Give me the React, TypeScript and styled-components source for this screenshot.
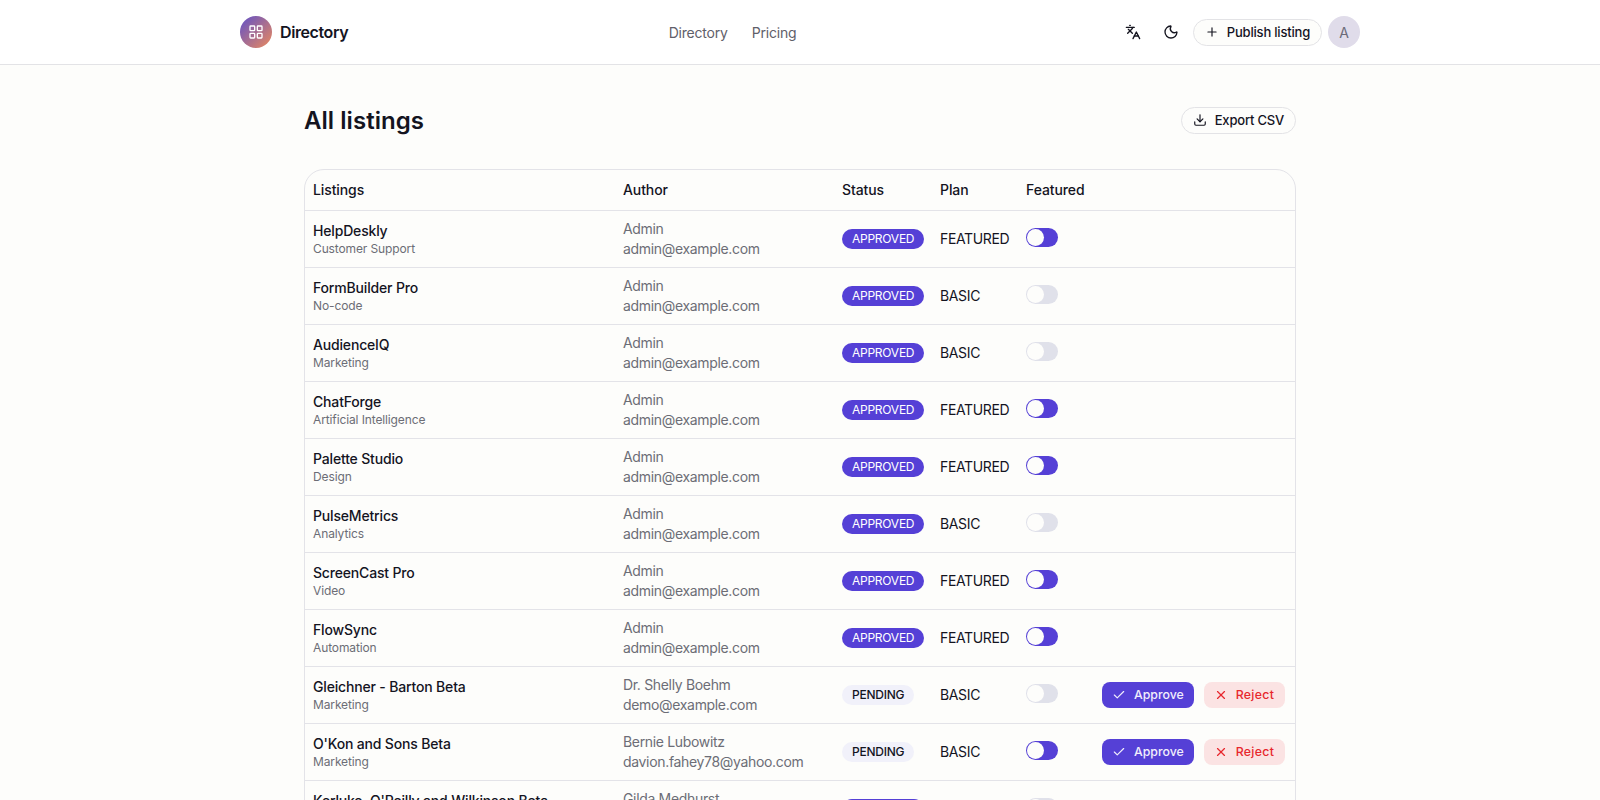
import { Check, Download, LayoutGrid, Languages, Moon, Plus, X } from 'lucide-react';
import styled, { createGlobalStyle } from 'styled-components';

const GlobalStyle = createGlobalStyle`
  html, body {
    margin: 0;
    height: 100%;
    overflow: hidden;
  }
  body {
    background: #fdfdfb;
    color: #14141f;
    font-family: Inter, "Liberation Sans", sans-serif;
  }
  * {
    box-sizing: border-box;
  }
`;

const Header = styled.header`
  height: 65px;
  background: #fff;
  border-bottom: 1px solid #e3e3e6;
  display: flex;
  justify-content: center;
`;

const HeaderInner = styled.div`
  width: 1120px;
  display: flex;
  justify-content: space-between;
  align-items: center;
`;

const Brand = styled.div`
  display: flex;
  align-items: center;
  gap: 8px;
  font-size: 16px;
  font-weight: 600;
  letter-spacing: -0.4px;
`;

const LogoMark = styled.div`
  width: 32px;
  height: 32px;
  border-radius: 50%;
  background: linear-gradient(135deg, #5f50c9, #ec8a5c);
  color: #fff;
  display: flex;
  align-items: center;
  justify-content: center;
`;

const Nav = styled.nav`
  display: flex;
  gap: 24px;
  font-size: 14px;
  letter-spacing: -0.2px;
  color: #5f6069;
`;

const HeaderActions = styled.div`
  display: flex;
  align-items: center;
  gap: 6px;
`;

const IconButton = styled.button`
  width: 32px;
  height: 32px;
  padding: 0;
  border: 0;
  background: none;
  color: #14141f;
  display: flex;
  align-items: center;
  justify-content: center;
`;

const OutlineButton = styled.button`
  height: 27px;
  padding: 0 11px;
  border: 1px solid #e3e3e6;
  border-radius: 14px;
  background: #fdfdfb;
  color: #14141f;
  font: 500 13px Inter, "Liberation Sans", sans-serif;
  letter-spacing: -0.2px;
  display: flex;
  align-items: center;
  gap: 8px;
`;

const Avatar = styled.div`
  width: 32px;
  height: 32px;
  border-radius: 50%;
  background: #e0dcea;
  color: #6b6b78;
  font-size: 14px;
  display: flex;
  align-items: center;
  justify-content: center;
`;

const Main = styled.main`
  width: 992px;
  margin: 0 auto;
  padding-top: 41px;
`;

const TitleRow = styled.div`
  display: flex;
  align-items: center;
  justify-content: space-between;
  height: 28px;
  margin-bottom: 35px;
`;

const Title = styled.h1`
  margin: 0;
  font-size: 24px;
  font-weight: 600;
  letter-spacing: 0.05px;
`;

const TableFrame = styled.div`
  border: 1px solid #e3e3e8;
  border-radius: 20px;
  overflow: hidden;
`;

const Table = styled.table`
  width: 100%;
  table-layout: fixed;
  border-collapse: collapse;
  font-size: 14px;
`;

const HeadCell = styled.th<{ $width?: number }>`
  ${(p) => (p.$width ? `width: ${p.$width}px;` : '')}
  height: 40px;
  padding: 0 8px;
  text-align: left;
  font-size: 14px;
  font-weight: 500;
  letter-spacing: -0.1px;
  border-bottom: 1px solid #e3e3e8;
`;

const Row = styled.tr`
  height: 57px;
  border-bottom: 1px solid #e3e3e8;
`;

const Cell = styled.td`
  padding: 0 8px;
  vertical-align: middle;
  white-space: nowrap;
`;

const ListingName = styled.div`
  font-size: 14px;
  font-weight: 500;
  line-height: 20px;
  letter-spacing: -0.17px;
`;

const ListingCategory = styled.div`
  font-size: 12px;
  line-height: 16px;
  letter-spacing: -0.12px;
  color: #6c6d76;
`;

const AuthorLine = styled.div`
  font-size: 14px;
  line-height: 20px;
  letter-spacing: -0.33px;
  color: #6c6d76;
`;

const Badge = styled.span<{ $pending?: boolean }>`
  display: inline-block;
  height: 20px;
  padding: 0 10px;
  border-radius: 10px;
  background: ${(p) => (p.$pending ? '#f1f1fa' : '#5540d6')};
  color: ${(p) => (p.$pending ? '#14141f' : '#fff')};
  font-size: 12px;
  font-weight: ${(p) => (p.$pending ? 500 : 400)};
  line-height: 20px;
  letter-spacing: -0.25px;
`;

const PlanText = styled.span`
  letter-spacing: -0.35px;
`;

const Switch = styled.span<{ $on: boolean }>`
  display: block;
  width: 32px;
  height: 19px;
  margin-top: -3px;
  padding: 1px;
  border-radius: 10px;
  background: ${(p) => (p.$on ? '#5540d6' : '#e0e1ea')};
`;

const SwitchThumb = styled.span`
  display: block;
  width: 17px;
  height: 17px;
  border-radius: 50%;
  background: #fdfdfb;
`;

const Actions = styled.div`
  display: flex;
  gap: 10px;
`;

const ApproveButton = styled.button`
  height: 26px;
  padding: 0 10px;
  border: 0;
  border-radius: 8px;
  background: #5540d6;
  color: #f1eefc;
  font: 500 12.3px Inter, "Liberation Sans", sans-serif;
  display: flex;
  align-items: center;
  gap: 8px;
`;

const RejectButton = styled(ApproveButton)`
  padding-right: 11px;
  background: #fbe3e3;
  color: #e7272d;
  letter-spacing: 0.3px;
`;

interface Listing {
  name: string;
  category: string;
  author: string;
  email: string;
  pending?: boolean;
  plan: string;
  on: boolean;
}

const admin = { author: 'Admin', email: 'admin@example.com' };

const listings: Listing[] = [
  { ...admin, name: 'HelpDeskly', category: 'Customer Support', plan: 'FEATURED', on: true },
  { ...admin, name: 'FormBuilder Pro', category: 'No-code', plan: 'BASIC', on: false },
  { ...admin, name: 'AudienceIQ', category: 'Marketing', plan: 'BASIC', on: false },
  { ...admin, name: 'ChatForge', category: 'Artificial Intelligence', plan: 'FEATURED', on: true },
  { ...admin, name: 'Palette Studio', category: 'Design', plan: 'FEATURED', on: true },
  { ...admin, name: 'PulseMetrics', category: 'Analytics', plan: 'BASIC', on: false },
  { ...admin, name: 'ScreenCast Pro', category: 'Video', plan: 'FEATURED', on: true },
  { ...admin, name: 'FlowSync', category: 'Automation', plan: 'FEATURED', on: true },
  {
    name: 'Gleichner - Barton Beta',
    category: 'Marketing',
    author: 'Dr. Shelly Boehm',
    email: 'demo@example.com',
    plan: 'BASIC',
    on: false,
    pending: true,
  },
  {
    name: "O'Kon and Sons Beta",
    category: 'Marketing',
    author: 'Bernie Lubowitz',
    email: 'davion.fahey78@yahoo.com',
    plan: 'BASIC',
    on: true,
    pending: true,
  },
  {
    name: "Kerluke, O'Reilly and Wilkinson Beta",
    category: 'Marketing',
    author: 'Gilda Medhurst',
    email: 'gilda@example.com',
    plan: 'BASIC',
    on: false,
  },
];

const App = (): JSX.Element => (
  <>
    <GlobalStyle />
    <Header>
      <HeaderInner>
        <Brand>
          <LogoMark><LayoutGrid size={16} /></LogoMark>
          Directory
        </Brand>
        <Nav>
          <span>Directory</span>
          <span>Pricing</span>
        </Nav>
        <HeaderActions>
          <IconButton><Languages size={16} /></IconButton>
          <IconButton><Moon size={16} /></IconButton>
          <OutlineButton><Plus size={14} />Publish listing</OutlineButton>
          <Avatar>A</Avatar>
        </HeaderActions>
      </HeaderInner>
    </Header>
    <Main>
      <TitleRow>
        <Title>All listings</Title>
        <OutlineButton><Download size={14} />Export CSV</OutlineButton>
      </TitleRow>
      <TableFrame>
        <Table>
          <thead>
            <tr>
              <HeadCell $width={310}>Listings</HeadCell>
              <HeadCell $width={219}>Author</HeadCell>
              <HeadCell $width={98}>Status</HeadCell>
              <HeadCell $width={86}>Plan</HeadCell>
              <HeadCell $width={76}>Featured</HeadCell>
              <HeadCell />
            </tr>
          </thead>
          <tbody>
            {listings.map((item) => (
              <Row key={item.name}>
                <Cell>
                  <ListingName>{item.name}</ListingName>
                  <ListingCategory>{item.category}</ListingCategory>
                </Cell>
                <Cell>
                  <AuthorLine>{item.author}</AuthorLine>
                  <AuthorLine>{item.email}</AuthorLine>
                </Cell>
                <Cell>
                  <Badge $pending={item.pending}>{item.pending ? 'PENDING' : 'APPROVED'}</Badge>
                </Cell>
                <Cell><PlanText>{item.plan}</PlanText></Cell>
                <Cell>
                  <Switch $on={item.on}><SwitchThumb /></Switch>
                </Cell>
                <Cell>
                  {item.pending && (
                    <Actions>
                      <ApproveButton><Check size={14} />Approve</ApproveButton>
                      <RejectButton><X size={14} />Reject</RejectButton>
                    </Actions>
                  )}
                </Cell>
              </Row>
            ))}
          </tbody>
        </Table>
      </TableFrame>
    </Main>
  </>
);

export default App;
